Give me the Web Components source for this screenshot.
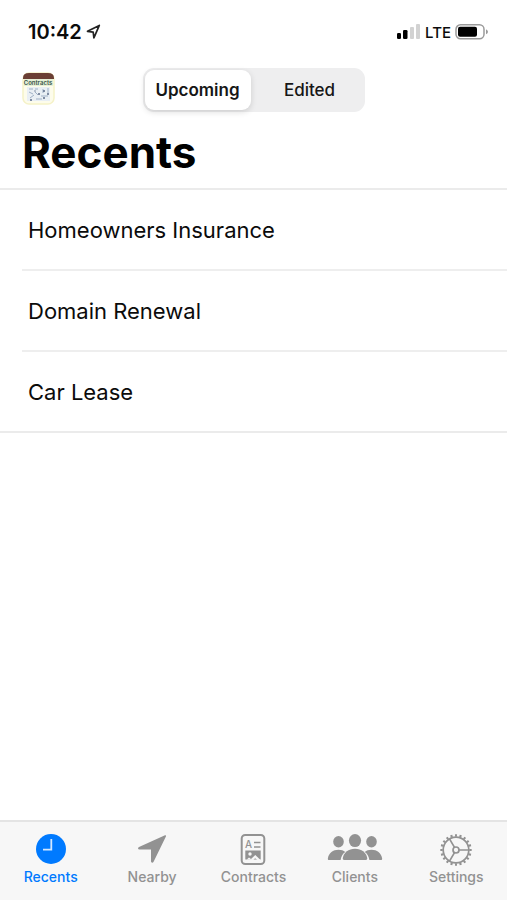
<!DOCTYPE html>
<html lang="en">
<head>
<meta charset="utf-8">
<meta name="viewport" content="width=device-width, initial-scale=1">
<title>Recents</title>
<style>
    body {
        margin: 0;
        background: #fff;
        color: #0b0b0b;
        font-family: Inter, "Liberation Sans", sans-serif;
    }
</style>
</head>
<body>
<contracts-app>
    <status-bar slot="status" time="10:42" network="LTE"></status-bar>
    <nav-header slot="header" heading="Recents">
        <app-logo slot="logo"></app-logo>
        <segmented-control options="Upcoming,Edited" selected="0"></segmented-control>
    </nav-header>
    <contract-list>
        <contract-row href="#homeowners">Homeowners Insurance</contract-row>
        <contract-row href="#domain">Domain Renewal</contract-row>
        <contract-row href="#car">Car Lease</contract-row>
    </contract-list>
    <tab-bar slot="tabs">
        <tab-item icon="clock" href="#recents" active>Recents</tab-item>
        <tab-item icon="arrow" href="#nearby">Nearby</tab-item>
        <tab-item icon="document" href="#contracts">Contracts</tab-item>
        <tab-item icon="people" href="#clients">Clients</tab-item>
        <tab-item icon="gear" href="#settings">Settings</tab-item>
    </tab-bar>
</contracts-app>

<script>
const ICONS = {
    clock: `
        <svg width="32" height="32" viewBox="0 0 32 32">
            <circle cx="16" cy="15" r="15" fill="currentColor"/>
            <path d="M16.3 5v10.7H8" fill="none" stroke="#d3e7ff" stroke-width="1.8"/>
        </svg>`,
    arrow: `
        <svg width="32" height="32" viewBox="0 0 32 32">
            <path d="M29 1.3 3 13c-1.5.8-1.2 2.6.5 2.6H15v11.7c0 1.7 1.9 2 2.6.4L29.9 2.600c.4-1-.1-1.600-.9-1.300z" fill="currentColor"/>
        </svg>`,
    document: `
        <svg width="32" height="32" viewBox="0 0 32 32">
            <rect x="4.7" y="1" width="22.6" height="29" rx="3.5" fill="none" stroke="currentColor" stroke-width="2"/>
            <text x="8" y="14" font-size="10" font-weight="500" fill="currentColor">A</text>
            <path d="M17 8.5h6.5M17 13h6.5" stroke="currentColor" stroke-width="1.5"/>
            <rect x="8.3" y="16.5" width="15.4" height="9" fill="currentColor"/>
            <circle cx="13" cy="20" r="1.7" fill="#f7f7f7"/>
            <path d="M9.8 25.5 12 23.5l2 1.6 4.3-4 5.2 4.9h-3.2l-2.2-1.8-1.8 1.8z" fill="#f7f7f7"/>
        </svg>`,
    people: `
        <svg width="56" height="32" viewBox="0 0 56 32">
            <g fill="currentColor">
                <ellipse cx="11.5" cy="7.8" rx="5.3" ry="5.7"/>
                <ellipse cx="44.5" cy="7.8" rx="5.3" ry="5.7"/>
                <path d="M2 26c-1 0-1.3-.8-1.1-1.8C1.8 19 6 15.8 11.5 15.8c2.9 0 5.1.8 6.7 2.1-2.7 2-4.1 4.6-4.6 8.1z"/>
                <path d="M54 26c1 0 1.3-.8 1.1-1.8-.9-5.2-5.1-8.4-10.6-8.4-2.9 0-5.1.8-6.7 2.1 2.7 2 4.1 4.6 4.6 8.1z"/>
                <ellipse cx="28" cy="6.6" rx="6.1" ry="6.5"/>
                <path d="M17.3 26c-1.3 0-1.7-.8-1.5-2 .9-5.3 5.7-9.2 12.2-9.2s11.3 3.9 12.2 9.2c.2 1.2-.2 2-1.5 2z"/>
            </g>
        </svg>`,
    gear: `
        <svg width="34" height="34" viewBox="0 0 34 34">
            <g fill="none" stroke="currentColor">
                <circle cx="17" cy="17" r="14.5" stroke-width="2.4" pathLength="40" stroke-dasharray="0.9 1.1" stroke-dashoffset="0.45"/>
                <circle cx="17" cy="17" r="12.8" stroke-width="1.7"/>
                <circle cx="17" cy="17" r="3" stroke-width="1.7"/>
                <path d="M20 17h10M15.5 14.4l-5-8.500M15.500 19.600l-5 8.500" stroke-width="1.700"/>
            </g>
        </svg>`
};

class ContractsApp extends HTMLElement {
    constructor() {
        super();
        this.attachShadow({ mode: 'open' }).innerHTML = `
        <style>
            :host {
                display: flex;
                flex-direction: column;
                min-height: 100vh;
            }
            main { flex: 1; }
        </style>
        <slot name="status"></slot>
        <slot name="header"></slot>
        <main><slot></slot></main>
        <slot name="tabs"></slot>`;
    }
}

class StatusBar extends HTMLElement {
    constructor() {
        super();
        this.attachShadow({ mode: 'open' });
    }

    connectedCallback() {
        this.shadowRoot.innerHTML = `
        <style>
            :host {
                display: flex;
                justify-content: space-between;
                align-items: center;
                height: 64px;
                padding: 0 18px 0 28px;
            }
            div {
                display: flex;
                align-items: center;
                gap: 4px;
            }
            .time { font-size: 20px; font-weight: 600; }
            .network { font-size: 15px; font-weight: 500; }
        </style>
        <div>
            <span class="time">${this.getAttribute('time')}</span>
            <svg width="15" height="16" viewBox="0 0 15 16">
                <path d="M13.3 1.4 1.5 7.3l5.7.9.7 5.7z" fill="none" stroke="#222" stroke-width="1.7" stroke-linejoin="round"/>
            </svg>
        </div>
        <div>
            <svg width="24" height="16" viewBox="0 0 24 16">
                <rect x="0" y="9" width="4" height="6" rx="1.3"/>
                <rect x="6" y="6" width="4.5" height="9" rx="1.3"/>
                <rect x="13" y="3" width="4" height="12" rx="1" fill="#d2d2d2"/>
                <rect x="19" y="0" width="4" height="15" rx="1" fill="#d2d2d2"/>
            </svg>
            <span class="network">${this.getAttribute('network')}</span>
            <svg width="34" height="16" viewBox="0 0 34 16">
                <rect x="1" y="0.8" width="28" height="14" rx="4.5" fill="none" stroke="#9a9a9a" stroke-width="1.5"/>
                <rect x="3" y="2.8" width="19" height="10" rx="2"/>
                <path d="M31 5.2q2 1 2 2.5t-2 2.5z" fill="#9a9a9a"/>
            </svg>
        </div>`;
    }
}

class NavHeader extends HTMLElement {
    constructor() {
        super();
        this.attachShadow({ mode: 'open' });
    }

    connectedCallback() {
        this.shadowRoot.innerHTML = `
        <style>
            :host {
                display: block;
                padding: 4px 22px 8px;
                border-bottom: 2px solid #ebebeb;
            }
            .bar {
                display: grid;
                grid-template-columns: 1fr auto 1fr;
                align-items: center;
            }
            h1 {
                margin: 12px 0 0;
                color: #000;
                font-size: 44px;
                font-weight: 700;
                line-height: 56px;
            }
        </style>
        <div class="bar">
            <slot name="logo"></slot>
            <slot></slot>
        </div>
        <h1>${this.getAttribute('heading')}</h1>`;
    }
}

class AppLogo extends HTMLElement {
    constructor() {
        super();
        this.attachShadow({ mode: 'open' }).innerHTML = `
        <style>
            :host { display: block; }
            svg { display: block; }
        </style>
        <svg width="34" height="36" viewBox="0 0 34 36">
            <rect x="1" y="1" width="31" height="31" rx="6" fill="#fdfceb" stroke="#f5f2c8" stroke-width="1.5"/>
            <path d="M1 7V6q0-5 6-5h19q6 0 6 5v1z" fill="#6b3f35"/>
            <rect x="2" y="7" width="29" height="7" fill="#e6efd6"/>
            <text x="16" y="13" text-anchor="middle" font-size="6" font-weight="600" fill="#355348">Contracts</text>
            <rect x="5" y="15" width="23" height="14" fill="#e9eff4"/>
            <g fill="none" stroke="#9fb0c6" stroke-width="1">
                <path d="M7 17h4M13 17h3M21 17v4M26 16v5M7 20l4 2M13 20l3 3M19 24h7M8 26l4-3M14 27h6"/>
            </g>
            <g fill="#5d6c88">
                <circle cx="17" cy="22" r="1"/><circle cx="22" cy="19" r="1"/><circle cx="26" cy="22" r="1"/>
                <circle cx="9" cy="28" r="1"/><circle cx="22" cy="26" r="1"/><circle cx="13" cy="19" r=".7"/>
            </g>
        </svg>`;
    }
}

class SegmentedControl extends HTMLElement {
    constructor() {
        super();
        this.attachShadow({ mode: 'open' });
    }

    connectedCallback() {
        const options = this.getAttribute('options').split(',');
        const selected = Number(this.getAttribute('selected'));

        this.shadowRoot.innerHTML = `
        <style>
            :host {
                display: grid;
                grid-template-columns: 1fr 1fr;
                gap: 6px;
                padding: 2px;
                border-radius: 11px;
                background: #eeeeef;
            }
            button {
                width: 106px;
                height: 40px;
                padding: 0;
                border: 0;
                border-radius: 9px;
                background: none;
                color: #161616;
                font: 500 17px Inter, "Liberation Sans", sans-serif;
            }
            button[aria-pressed="true"] {
                background: #fff;
                font-weight: 600;
                box-shadow: 0 2px 6px rgba(0, 0, 0, 0.14);
            }
        </style>
        ${options.map((name, i) => `<button type="button" aria-pressed="${i === selected}">${name}</button>`).join('')}`;

        const buttons = this.shadowRoot.querySelectorAll('button');
        buttons.forEach(button => {
            button.addEventListener('click', () => {
                buttons.forEach(b => b.setAttribute('aria-pressed', b === button));
            });
        });
    }
}

class ContractList extends HTMLElement {
    constructor() {
        super();
        this.attachShadow({ mode: 'open' }).innerHTML = `
        <style>
            :host {
                display: block;
                border-bottom: 2px solid #ebebeb;
            }
            ::slotted(:not(:first-child)) { border-top: 2px solid #eeeeee; }
        </style>
        <slot></slot>`;
    }
}

class ContractRow extends HTMLElement {
    constructor() {
        super();
        this.attachShadow({ mode: 'open' });
    }

    connectedCallback() {
        this.shadowRoot.innerHTML = `
        <style>
            :host {
                display: block;
                margin-left: 22px;
            }
            a {
                display: block;
                padding: 26px 6px 25px;
                color: inherit;
                font-size: 22px;
                line-height: 28px;
                text-decoration: none;
            }
        </style>
        <a href="${this.getAttribute('href')}"><slot></slot></a>`;
    }
}

class TabBar extends HTMLElement {
    constructor() {
        super();
        this.attachShadow({ mode: 'open' }).innerHTML = `
        <style>
            :host {
                display: block;
                position: sticky;
                bottom: 0;
                border-top: 2px solid #e4e4e4;
                background: #f7f7f7;
            }
            nav {
                display: grid;
                grid-template-columns: repeat(5, 1fr);
            }
        </style>
        <nav><slot></slot></nav>`;
    }
}

class TabItem extends HTMLElement {
    constructor() {
        super();
        this.attachShadow({ mode: 'open' });
    }

    connectedCallback() {
        this.shadowRoot.innerHTML = `
        <style>
            :host {
                display: block;
                color: #929292;
            }
            :host([active]) { color: #007aff; }
            a {
                display: flex;
                flex-direction: column;
                align-items: center;
                padding: 10px 0 14px;
                color: inherit;
                font-size: 14px;
                font-weight: 500;
                line-height: 18px;
                text-decoration: none;
            }
            .icon {
                display: flex;
                align-items: center;
                height: 36px;
            }
        </style>
        <a href="${this.getAttribute('href')}">
            <span class="icon">${ICONS[this.getAttribute('icon')]}</span>
            <slot></slot>
        </a>`;
    }
}

customElements.define('contracts-app', ContractsApp);
customElements.define('status-bar', StatusBar);
customElements.define('nav-header', NavHeader);
customElements.define('app-logo', AppLogo);
customElements.define('segmented-control', SegmentedControl);
customElements.define('contract-list', ContractList);
customElements.define('contract-row', ContractRow);
customElements.define('tab-bar', TabBar);
customElements.define('tab-item', TabItem);
</script>
</body>
</html>
